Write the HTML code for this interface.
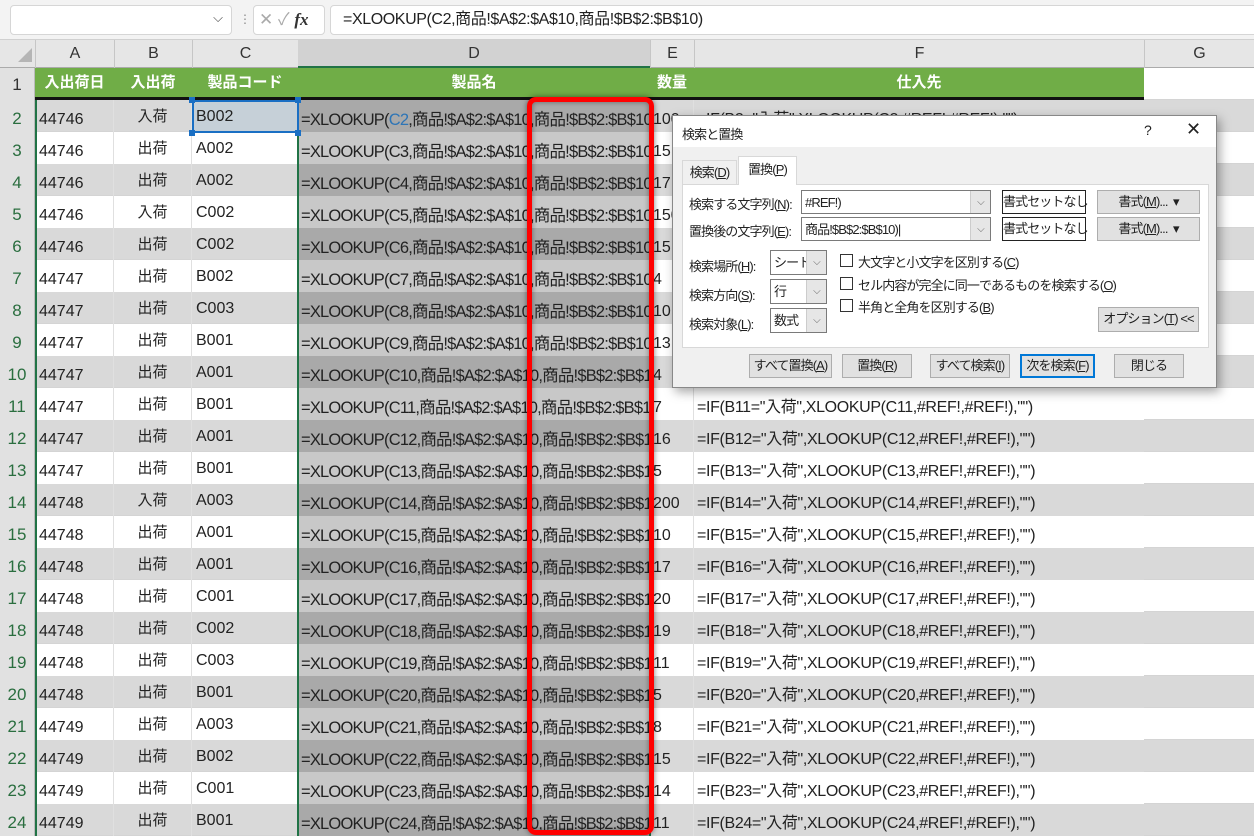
<!DOCTYPE html>
<html><head><meta charset="utf-8"><style>
*{margin:0;padding:0;box-sizing:border-box}
body{width:1254px;height:836px;overflow:hidden;background:#fff;position:relative;font-family:"Liberation Sans","Noto Sans CJK JP",sans-serif;font-size:16px;color:#222}
.a{position:absolute}
.r{position:absolute;left:0;width:1254px;height:32px;border-bottom:1px solid #d4d4d4}
.r span{position:absolute;white-space:nowrap;overflow:hidden}
.rh{left:0;width:35px;height:32px;background:#e1e1e1;color:#2a6e3f;text-align:center;line-height:38px;font-size:17px;border-right:1px solid #bbb}
.ca{left:36px;width:78px;line-height:40px;padding-left:3px;border-right:1px solid #e0e0e0;height:32px}
.cb{left:114px;width:78px;text-align:center;line-height:33px;border-right:1px solid #e0e0e0;height:32px;font-size:15px}
.cc{left:192px;width:106px;line-height:33px;padding-left:4px;height:32px}
.cd{left:299px;width:351px;line-height:40px;padding-left:2px;height:32px;font-size:16.5px;letter-spacing:-0.8px}
.ce{left:650px;width:44px;line-height:40px;padding-left:3px;height:32px;border-right:1px solid #e0e0e0}
.cf{left:694px;width:450px;line-height:40px;padding-left:3px;height:32px;font-size:16px;letter-spacing:-0.35px}
.ev{background:#d9d9d9}
.ev .cd{background:#a9a9a9}
.od .cd{background:#c8c8c8}
.ev .cf,.ev .ce{background:#d9d9d9}
.od .ca,.od .cb,.od .cc,.od .ce,.od .cf{background:#fff}
.dlg{font-size:13px;letter-spacing:-0.9px}
.btn{position:absolute;height:24px;background:#e1e1e1;border:1px solid #adadad;text-align:center;line-height:22px;white-space:nowrap}
.lbl{position:absolute;white-space:nowrap}
.sel{position:absolute;height:25px;background:#fff;border:1px solid #7a7a7a;line-height:23px;padding-left:3px;white-space:nowrap;overflow:hidden}
.sel i{position:absolute;right:0;top:0;width:20px;height:23px;background:#e6e6e6;border-left:1px solid #ccc;font-style:normal;text-align:center;color:#666;font-size:10px;line-height:23px}
.cb2{position:absolute;width:13px;height:13px;border:1px solid #333;background:#fff}
u{text-decoration:underline}
</style></head><body>
<div class="a" style="left:0;top:0;width:1254px;height:40px;background:#f3f3f3;border-bottom:1px solid #d0d0d0"></div>
<div class="a" style="left:10px;top:5px;width:222px;height:30px;background:#fff;border:1px solid #d6d6d6;border-radius:4px"><span class="a" style="right:8px;top:4px;font-size:13px;color:#444">⌵</span></div>
<div class="a" style="left:239px;top:12px;color:#888;font-size:12px">⋮</div>
<div class="a" style="left:253px;top:5px;width:72px;height:30px;background:#fff;border:1px solid #d6d6d6;border-radius:4px;color:#aaa;font-size:17px;line-height:28px;padding-left:5px">✕ ✓ <i style="color:#333;font-family:'Liberation Serif',serif;font-weight:bold">fx</i></div>
<div class="a" style="left:330px;top:5px;width:930px;height:30px;background:#fff;border:1px solid #d6d6d6;border-radius:4px;line-height:28px;padding-left:12px;font-size:16px;letter-spacing:-0.4px">=XLOOKUP(C2,商品!$A$2:$A$10,商品!$B$2:$B$10)</div>
<div class="a" style="left:0;top:40px;width:1254px;height:28px;background:#e6e6e6;border-bottom:1px solid #ababab"></div>
<div class="a" style="left:18px;top:48px;width:0;height:0;border-left:14px solid transparent;border-bottom:14px solid #b5b5b5"></div>
<div class="a" style="left:35px;top:40px;width:79px;height:28px;text-align:center;line-height:28px;border-left:1px solid #c6c6c6;color:#333">A</div>
<div class="a" style="left:114px;top:40px;width:78px;height:28px;text-align:center;line-height:28px;border-left:1px solid #c6c6c6;color:#333">B</div>
<div class="a" style="left:192px;top:40px;width:106px;height:28px;text-align:center;line-height:28px;border-left:1px solid #c6c6c6;color:#333">C</div>
<div class="a" style="left:298px;top:40px;width:352px;height:28px;text-align:center;line-height:28px;background:#d2d2d2;border-bottom:2px solid #217346;color:#333">D</div>
<div class="a" style="left:650px;top:40px;width:44px;height:28px;text-align:center;line-height:28px;border-left:1px solid #c6c6c6;color:#333">E</div>
<div class="a" style="left:694px;top:40px;width:450px;height:28px;text-align:center;line-height:28px;border-left:1px solid #c6c6c6;color:#333">F</div>
<div class="a" style="left:1144px;top:40px;width:110px;height:28px;text-align:center;line-height:28px;border-left:1px solid #c6c6c6;color:#333">G</div>
<div class="a" style="left:0;top:68px;width:35px;height:32px;background:#e1e1e1;color:#333;text-align:center;line-height:34px;font-size:17px;border-right:1px solid #bbb">1</div>
<div class="a" style="left:35px;top:68px;width:1109px;height:32px;background:#70ad47;border-bottom:3px solid #111;color:#fff;font-weight:bold;font-size:15px;line-height:30px">
<span class="a" style="left:0;width:79px;text-align:center">入出荷日</span>
<span class="a" style="left:79px;width:78px;text-align:center">入出荷</span>
<span class="a" style="left:157px;width:106px;text-align:center">製品コード</span>
<span class="a" style="left:263px;width:352px;text-align:center">製品名</span>
<span class="a" style="left:615px;width:44px;text-align:center">数量</span>
<span class="a" style="left:659px;width:450px;text-align:center">仕入先</span>
</div>
<div class="a" style="left:1144px;top:68px;width:110px;height:32px;border-bottom:1px solid #d4d4d4"></div>

<div class="r ev" style="top:100px"><span class="rh">2</span><span class="ca">44746</span><span class="cb">入荷</span><span class="cc" style="background:#c6d0d8">B002</span><span class="cd">=XLOOKUP(<span style="position:static;color:#2e75b6">C2</span>,商品!$A$2:$A$10,商品!$B$2:$B$10)</span><span class="ce">100</span><span class="cf">=IF(B2="入荷",XLOOKUP(C2,#REF!,#REF!),"")</span></div>
<div class="r od" style="top:132px"><span class="rh">3</span><span class="ca">44746</span><span class="cb">出荷</span><span class="cc">A002</span><span class="cd">=XLOOKUP(C3,商品!$A$2:$A$10,商品!$B$2:$B$10)</span><span class="ce">15</span><span class="cf"></span></div>
<div class="r ev" style="top:164px"><span class="rh">4</span><span class="ca">44746</span><span class="cb">出荷</span><span class="cc">A002</span><span class="cd">=XLOOKUP(C4,商品!$A$2:$A$10,商品!$B$2:$B$10)</span><span class="ce">17</span><span class="cf"></span></div>
<div class="r od" style="top:196px"><span class="rh">5</span><span class="ca">44746</span><span class="cb">入荷</span><span class="cc">C002</span><span class="cd">=XLOOKUP(C5,商品!$A$2:$A$10,商品!$B$2:$B$10)</span><span class="ce">150</span><span class="cf"></span></div>
<div class="r ev" style="top:228px"><span class="rh">6</span><span class="ca">44746</span><span class="cb">出荷</span><span class="cc">C002</span><span class="cd">=XLOOKUP(C6,商品!$A$2:$A$10,商品!$B$2:$B$10)</span><span class="ce">15</span><span class="cf"></span></div>
<div class="r od" style="top:260px"><span class="rh">7</span><span class="ca">44747</span><span class="cb">出荷</span><span class="cc">B002</span><span class="cd">=XLOOKUP(C7,商品!$A$2:$A$10,商品!$B$2:$B$10)</span><span class="ce">4</span><span class="cf"></span></div>
<div class="r ev" style="top:292px"><span class="rh">8</span><span class="ca">44747</span><span class="cb">出荷</span><span class="cc">C003</span><span class="cd">=XLOOKUP(C8,商品!$A$2:$A$10,商品!$B$2:$B$10)</span><span class="ce">10</span><span class="cf"></span></div>
<div class="r od" style="top:324px"><span class="rh">9</span><span class="ca">44747</span><span class="cb">出荷</span><span class="cc">B001</span><span class="cd">=XLOOKUP(C9,商品!$A$2:$A$10,商品!$B$2:$B$10)</span><span class="ce">13</span><span class="cf"></span></div>
<div class="r ev" style="top:356px"><span class="rh">10</span><span class="ca">44747</span><span class="cb">出荷</span><span class="cc">A001</span><span class="cd">=XLOOKUP(C10,商品!$A$2:$A$10,商品!$B$2:$B$10)</span><span class="ce">4</span><span class="cf"></span></div>
<div class="r od" style="top:388px"><span class="rh">11</span><span class="ca">44747</span><span class="cb">出荷</span><span class="cc">B001</span><span class="cd">=XLOOKUP(C11,商品!$A$2:$A$10,商品!$B$2:$B$10)</span><span class="ce">7</span><span class="cf">=IF(B11="入荷",XLOOKUP(C11,#REF!,#REF!),"")</span></div>
<div class="r ev" style="top:420px"><span class="rh">12</span><span class="ca">44747</span><span class="cb">出荷</span><span class="cc">A001</span><span class="cd">=XLOOKUP(C12,商品!$A$2:$A$10,商品!$B$2:$B$10)</span><span class="ce">16</span><span class="cf">=IF(B12="入荷",XLOOKUP(C12,#REF!,#REF!),"")</span></div>
<div class="r od" style="top:452px"><span class="rh">13</span><span class="ca">44747</span><span class="cb">出荷</span><span class="cc">B001</span><span class="cd">=XLOOKUP(C13,商品!$A$2:$A$10,商品!$B$2:$B$10)</span><span class="ce">5</span><span class="cf">=IF(B13="入荷",XLOOKUP(C13,#REF!,#REF!),"")</span></div>
<div class="r ev" style="top:484px"><span class="rh">14</span><span class="ca">44748</span><span class="cb">入荷</span><span class="cc">A003</span><span class="cd">=XLOOKUP(C14,商品!$A$2:$A$10,商品!$B$2:$B$10)</span><span class="ce">200</span><span class="cf">=IF(B14="入荷",XLOOKUP(C14,#REF!,#REF!),"")</span></div>
<div class="r od" style="top:516px"><span class="rh">15</span><span class="ca">44748</span><span class="cb">出荷</span><span class="cc">A001</span><span class="cd">=XLOOKUP(C15,商品!$A$2:$A$10,商品!$B$2:$B$10)</span><span class="ce">10</span><span class="cf">=IF(B15="入荷",XLOOKUP(C15,#REF!,#REF!),"")</span></div>
<div class="r ev" style="top:548px"><span class="rh">16</span><span class="ca">44748</span><span class="cb">出荷</span><span class="cc">A001</span><span class="cd">=XLOOKUP(C16,商品!$A$2:$A$10,商品!$B$2:$B$10)</span><span class="ce">17</span><span class="cf">=IF(B16="入荷",XLOOKUP(C16,#REF!,#REF!),"")</span></div>
<div class="r od" style="top:580px"><span class="rh">17</span><span class="ca">44748</span><span class="cb">出荷</span><span class="cc">C001</span><span class="cd">=XLOOKUP(C17,商品!$A$2:$A$10,商品!$B$2:$B$10)</span><span class="ce">20</span><span class="cf">=IF(B17="入荷",XLOOKUP(C17,#REF!,#REF!),"")</span></div>
<div class="r ev" style="top:612px"><span class="rh">18</span><span class="ca">44748</span><span class="cb">出荷</span><span class="cc">C002</span><span class="cd">=XLOOKUP(C18,商品!$A$2:$A$10,商品!$B$2:$B$10)</span><span class="ce">19</span><span class="cf">=IF(B18="入荷",XLOOKUP(C18,#REF!,#REF!),"")</span></div>
<div class="r od" style="top:644px"><span class="rh">19</span><span class="ca">44748</span><span class="cb">出荷</span><span class="cc">C003</span><span class="cd">=XLOOKUP(C19,商品!$A$2:$A$10,商品!$B$2:$B$10)</span><span class="ce">11</span><span class="cf">=IF(B19="入荷",XLOOKUP(C19,#REF!,#REF!),"")</span></div>
<div class="r ev" style="top:676px"><span class="rh">20</span><span class="ca">44748</span><span class="cb">出荷</span><span class="cc">B001</span><span class="cd">=XLOOKUP(C20,商品!$A$2:$A$10,商品!$B$2:$B$10)</span><span class="ce">5</span><span class="cf">=IF(B20="入荷",XLOOKUP(C20,#REF!,#REF!),"")</span></div>
<div class="r od" style="top:708px"><span class="rh">21</span><span class="ca">44749</span><span class="cb">出荷</span><span class="cc">A003</span><span class="cd">=XLOOKUP(C21,商品!$A$2:$A$10,商品!$B$2:$B$10)</span><span class="ce">8</span><span class="cf">=IF(B21="入荷",XLOOKUP(C21,#REF!,#REF!),"")</span></div>
<div class="r ev" style="top:740px"><span class="rh">22</span><span class="ca">44749</span><span class="cb">出荷</span><span class="cc">B002</span><span class="cd">=XLOOKUP(C22,商品!$A$2:$A$10,商品!$B$2:$B$10)</span><span class="ce">15</span><span class="cf">=IF(B22="入荷",XLOOKUP(C22,#REF!,#REF!),"")</span></div>
<div class="r od" style="top:772px"><span class="rh">23</span><span class="ca">44749</span><span class="cb">出荷</span><span class="cc">C001</span><span class="cd">=XLOOKUP(C23,商品!$A$2:$A$10,商品!$B$2:$B$10)</span><span class="ce">14</span><span class="cf">=IF(B23="入荷",XLOOKUP(C23,#REF!,#REF!),"")</span></div>
<div class="r ev" style="top:804px"><span class="rh">24</span><span class="ca">44749</span><span class="cb">出荷</span><span class="cc">B001</span><span class="cd">=XLOOKUP(C24,商品!$A$2:$A$10,商品!$B$2:$B$10)</span><span class="ce">11</span><span class="cf">=IF(B24="入荷",XLOOKUP(C24,#REF!,#REF!),"")</span></div>

<div class="a" style="left:35px;top:100px;width:2px;height:736px;background:#217346"></div>
<div class="a" style="left:297px;top:100px;width:2px;height:736px;background:#217346"></div>
<div class="a" style="left:649px;top:100px;width:2px;height:736px;background:#217346"></div>
<div class="a" style="left:192px;top:100px;width:107px;height:33px;border:2px solid #1a6fc4"></div>
<div class="a" style="left:189px;top:97px;width:6px;height:6px;background:#1a6fc4"></div>
<div class="a" style="left:295px;top:97px;width:6px;height:6px;background:#1a6fc4"></div>
<div class="a" style="left:189px;top:130px;width:6px;height:6px;background:#1a6fc4"></div>
<div class="a" style="left:295px;top:130px;width:6px;height:6px;background:#1a6fc4"></div>
<div class="a" style="left:527px;top:97px;width:127px;height:738px;border:5px solid #ff0000;border-radius:9px;box-shadow:0 0 6px rgba(0,0,0,.5),inset 0 0 6px rgba(0,0,0,.4)"></div>

<div class="a dlg" style="left:672px;top:115px;width:545px;height:273px;background:#f0f0f0;border:1px solid #888;box-shadow:3px 4px 10px rgba(0,0,0,.35)">
<div class="a" style="left:0;top:0;width:543px;height:31px;background:#fff"></div>
<div class="lbl" style="left:9px;top:8px">検索と置換</div>
<div class="lbl" style="left:471px;top:6px;font-size:14px">?</div>
<div class="lbl" style="left:513px;top:3px;font-size:18px">✕</div>
<div class="a" style="left:9px;top:44px;width:55px;height:24px;border:1px solid #d8d8d8;border-bottom:none;line-height:24px;text-align:center">検索(<u>D</u>)</div>
<div class="a" style="left:65px;top:40px;width:59px;height:29px;background:#fff;border:1px solid #d8d8d8;border-bottom:none;line-height:26px;text-align:center;z-index:2">置換(<u>P</u>)</div>
<div class="a" style="left:9px;top:68px;width:527px;height:164px;background:#fff;border:1px solid #d8d8d8"></div>
<div class="lbl" style="left:16px;top:78px">検索する文字列(<u>N</u>):</div>
<div class="sel" style="left:128px;top:74px;width:190px;height:24px">#REF!)<i>⌵</i></div>
<div class="a" style="left:329px;top:74px;width:84px;height:24px;border:1px solid #222;background:#fff;line-height:22px;text-align:center;white-space:nowrap">書式セットなし</div>
<div class="btn" style="left:424px;top:74px;width:103px">書式(<u>M</u>)... &nbsp;▾</div>
<div class="lbl" style="left:16px;top:105px">置換後の文字列(<u>E</u>):</div>
<div class="sel" style="left:128px;top:101px;width:190px;height:24px">商品!$B$2:$B$10)|<i>⌵</i></div>
<div class="a" style="left:329px;top:101px;width:84px;height:24px;border:1px solid #222;background:#fff;line-height:22px;text-align:center;white-space:nowrap">書式セットなし</div>
<div class="btn" style="left:424px;top:101px;width:103px">書式(<u>M</u>)... &nbsp;▾</div>
<div class="lbl" style="left:16px;top:140px">検索場所(<u>H</u>):</div>
<div class="sel" style="left:97px;top:134px;width:57px">シート<i>⌵</i></div>
<div class="lbl" style="left:16px;top:169px">検索方向(<u>S</u>):</div>
<div class="sel" style="left:97px;top:163px;width:57px">行<i>⌵</i></div>
<div class="lbl" style="left:16px;top:198px">検索対象(<u>L</u>):</div>
<div class="sel" style="left:97px;top:192px;width:57px">数式<i>⌵</i></div>
<div class="cb2" style="left:167px;top:138px"></div><div class="lbl" style="left:185px;top:136px">大文字と小文字を区別する(<u>C</u>)</div>
<div class="cb2" style="left:167px;top:161px"></div><div class="lbl" style="left:185px;top:159px">セル内容が完全に同一であるものを検索する(<u>O</u>)</div>
<div class="cb2" style="left:167px;top:183px"></div><div class="lbl" style="left:185px;top:181px">半角と全角を区別する(<u>B</u>)</div>
<div class="btn" style="left:425px;top:191px;width:101px;height:25px">オプション(<u>T</u>) &lt;&lt;</div>
<div class="btn" style="left:76px;top:238px;width:83px">すべて置換(<u>A</u>)</div>
<div class="btn" style="left:169px;top:238px;width:70px">置換(<u>R</u>)</div>
<div class="btn" style="left:257px;top:238px;width:80px">すべて検索(<u>I</u>)</div>
<div class="btn" style="left:347px;top:238px;width:75px;border:2px solid #0078d7;line-height:20px">次を検索(<u>F</u>)</div>
<div class="btn" style="left:441px;top:238px;width:70px">閉じる</div>
</div>
</body></html>
